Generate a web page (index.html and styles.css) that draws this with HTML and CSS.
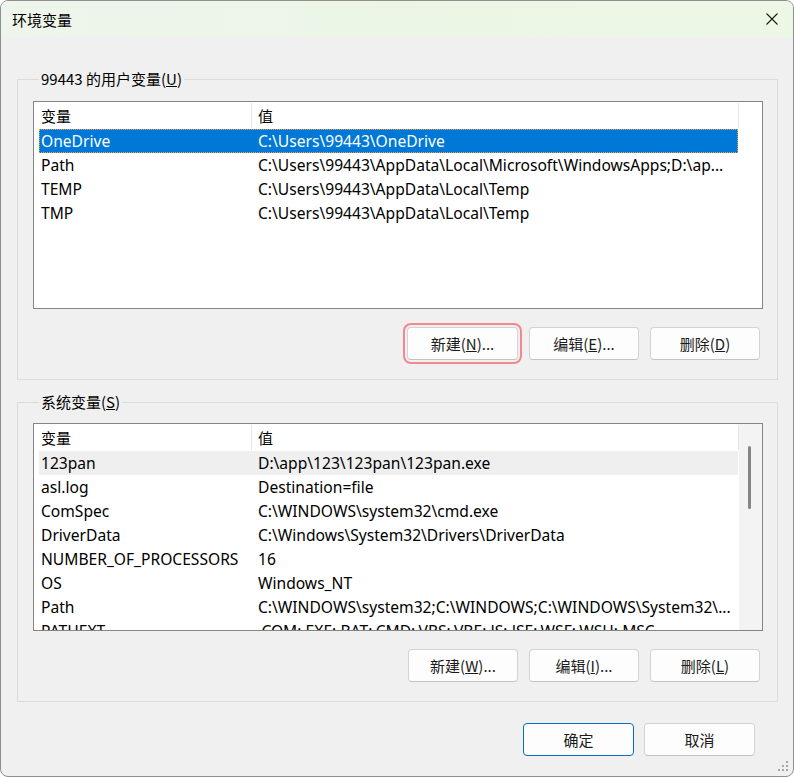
FILE: index.html
```html
<!DOCTYPE html>
<html lang="zh-CN">
<head>
<meta charset="utf-8">
<title>环境变量</title>
<link rel="stylesheet" href="styles.css">
</head>
<body>
<div class="window">
  <div class="titlebar">
    <span class="title">环境变量</span>
    <svg class="close" width="12" height="12" viewBox="0 0 12 12"><path d="M0.5 0.5 L11.5 11.5 M11.5 0.5 L0.5 11.5" stroke="#1a1a1a" stroke-width="1.1" fill="none"/></svg>
  </div>
  <div class="content">
    <fieldset class="group">
      <legend>99443 的用户变量(<u>U</u>)</legend>
      <div class="listview">
        <div class="lv-main">
          <div class="lv-head"><div class="h1">变量</div><div class="h2">值</div></div>
          <div class="row sel"><div class="c1">OneDrive</div><div class="c2">C:\Users\99443\OneDrive</div></div>
          <div class="row"><div class="c1">Path</div><div class="c2">C:\Users\99443\AppData\Local\Microsoft\WindowsApps;D:\ap...</div></div>
          <div class="row"><div class="c1">TEMP</div><div class="c2">C:\Users\99443\AppData\Local\Temp</div></div>
          <div class="row"><div class="c1">TMP</div><div class="c2">C:\Users\99443\AppData\Local\Temp</div></div>
        </div>
        <div class="lv-pad"></div>
      </div>
      <div class="btnrow">
        <button class="btn focus">新建(<u>N</u>)...</button>
        <button class="btn">编辑(<u>E</u>)...</button>
        <button class="btn">删除(<u>D</u>)</button>
      </div>
    </fieldset>

    <fieldset class="group sys">
      <legend>系统变量(<u>S</u>)</legend>
      <div class="listview">
        <div class="lv-main">
          <div class="lv-head"><div class="h1">变量</div><div class="h2">值</div></div>
          <div class="row hover"><div class="c1">123pan</div><div class="c2">D:\app\123\123pan\123pan.exe</div></div>
          <div class="row"><div class="c1">asl.log</div><div class="c2">Destination=file</div></div>
          <div class="row"><div class="c1">ComSpec</div><div class="c2">C:\WINDOWS\system32\cmd.exe</div></div>
          <div class="row"><div class="c1">DriverData</div><div class="c2">C:\Windows\System32\Drivers\DriverData</div></div>
          <div class="row"><div class="c1">NUMBER_OF_PROCESSORS</div><div class="c2">16</div></div>
          <div class="row"><div class="c1">OS</div><div class="c2">Windows_NT</div></div>
          <div class="row"><div class="c1">Path</div><div class="c2">C:\WINDOWS\system32;C:\WINDOWS;C:\WINDOWS\System32\...</div></div>
          <div class="row"><div class="c1">PATHEXT</div><div class="c2">.COM;.EXE;.BAT;.CMD;.VBS;.VBE;.JS;.JSE;.WSF;.WSH;.MSC</div></div>
        </div>
        <div class="scrollbar"><div class="thumb"></div></div>
      </div>
      <div class="btnrow">
        <button class="btn">新建(<u>W</u>)...</button>
        <button class="btn">编辑(<u>I</u>)...</button>
        <button class="btn">删除(<u>L</u>)</button>
      </div>
    </fieldset>

    <div class="dlgbtns">
      <button class="btn default">确定</button>
      <button class="btn">取消</button>
    </div>
  </div>
  <svg class="grip" width="12" height="12" viewBox="0 0 12 12" fill="#a8a8a8">
    <rect x="8" y="0" width="2" height="2"/>
    <rect x="4" y="4" width="2" height="2"/><rect x="8" y="4" width="2" height="2"/>
    <rect x="0" y="8" width="2" height="2"/><rect x="4" y="8" width="2" height="2"/><rect x="8" y="8" width="2" height="2"/>
  </svg>
</div>
</body>
</html>
```
FILE: styles.css
```css
* { box-sizing: border-box; }
html, body { margin: 0; padding: 0; background: #ffffff; }
body {
  font-family: "Noto Sans", "Noto Sans CJK SC", sans-serif;
  font-size: 15px;
  color: #000;
}
.window {
  position: relative;
  width: 794px;
  height: 777px;
  border: 1px solid #8f8f8f;
  border-radius: 8px;
  background: #f0f0f0;
  overflow: hidden;
  display: flex;
  flex-direction: column;
}
.titlebar {
  height: 36px;
  flex: none;
  display: flex;
  align-items: center;
  justify-content: space-between;
  padding: 0 15px 0 11px;
  background: linear-gradient(90deg, #eef5ec 0%, #ecf6e6 50%, #ecf8e5 100%);
}
.title { font-family: "Noto Sans CJK SC", sans-serif; font-size: 15px; color: #000; }
.close { display: block; }
.content {
  flex: 1;
  display: flex;
  flex-direction: column;
  padding: 32px 15px 0 16px;
}
.group {
  margin: 0;
  border: 1px solid #dcdcdc;
  padding: 12px 14px 19px 15px;
  min-width: 0;
}
.group.sys { margin-top: 12px; padding-top: 11px; padding-bottom: 19px; }
legend {
  font-family: "Noto Sans CJK SC", sans-serif;
  margin-left: 6px;
  padding: 0 2px;
  line-height: 20px;
  height: 20px;
  color: #000;
}
.listview {
  height: 208px;
  border: 1px solid #858585;
  background: #fff;
  display: flex;
  overflow: hidden;
}
.lv-main { flex: none; width: 705px; overflow: hidden; }
.lv-pad { flex: 1; }
.lv-head {
  display: flex;
  height: 27px;
  align-items: stretch;
}
.h1, .h2 {
  font-family: "Noto Sans CJK SC", sans-serif;
  border-right: 1px solid #e5e5e5;
  margin-top: 1px;
  margin-bottom: 1px;
  line-height: 25px;
}
.h1 { width: 218px; padding-left: 7px; }
.h2 { width: 487px; padding-left: 6px; }
.row {
  margin-left: 5px;
  width: 699px;
  height: 24px;
  line-height: 24px;
  display: grid;
  grid-template-columns: 213px 486px;
  white-space: nowrap;
  font-size: 15.6px;
}
.row .c1 { padding-left: 2px; overflow: hidden; }
.row .c2 { padding-left: 6px; overflow: hidden; }
.row.sel {
  background: #0078d7;
  color: #fff;
  outline: 1px dotted #f0a040;
  outline-offset: -1px;
}
.row.hover { background: #efefef; }
.scrollbar {
  flex: 1;
  background: #f3f3f3;
  position: relative;
}
.thumb {
  position: absolute;
  left: 9px;
  top: 22px;
  width: 3px;
  height: 63px;
  border-radius: 2px;
  background: #858585;
}
.btnrow {
  display: flex;
  justify-content: flex-end;
  gap: 11px;
  margin-top: 18px;
  padding-right: 3px;
}
.btn {
  width: 110px;
  height: 33px;
  border: 1px solid #d3d3d3;
  border-bottom-color: #c2c2c2;
  border-radius: 4px;
  background: #fdfdfd;
  font-family: "Noto Sans CJK SC", "Noto Sans", sans-serif;
  font-size: 15px;
  color: #1b1b1b;
  padding: 0;
}
.btn.focus {
  width: 111px;
  box-shadow: 0 0 0 2px #f0f0f0, 0 0 0 4px #f2878f;
}
.dlgbtns {
  display: flex;
  justify-content: flex-end;
  gap: 10px;
  margin-top: 21px;
  padding-right: 23px;
}
.dlgbtns .btn { width: 111px; height: 33px; }
.btn.default { border: 1px solid #0a6cc6; }
.grip { position: absolute; right: 3px; bottom: 3px; }
```
